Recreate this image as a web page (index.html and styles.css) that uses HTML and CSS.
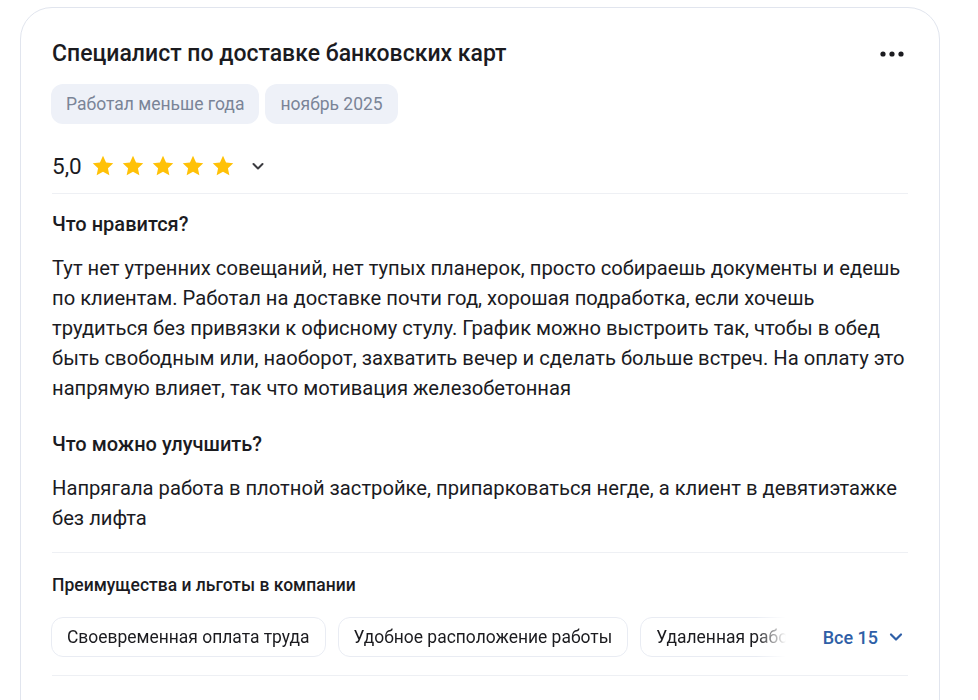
FILE: index.html
```html
<!DOCTYPE html>
<html lang="ru">
<head>
<meta charset="utf-8">
<link rel="stylesheet" href="styles.css">
</head>
<body>
<div class="card">
  <div class="head">
    <h2 class="title">Специалист по доставке банковских карт</h2>
    <button class="more" aria-label="Ещё">
      <svg width="24" height="8" viewBox="0 0 24 8"><circle cx="3" cy="4" r="2.6"/><circle cx="12" cy="4" r="2.6"/><circle cx="21" cy="4" r="2.6"/></svg>
    </button>
  </div>
  <div class="tags">
    <span class="tag">Работал меньше года</span>
    <span class="tag">ноябрь 2025</span>
  </div>
  <div class="rating">
    <span class="score">5,0</span>
    <span class="stars">
      <svg class="star" viewBox="0 0 24 24"><path d="M12 1.8l3.05 6.6 7.2.85-5.33 4.93 1.43 7.12L12 17.7l-6.35 3.6 1.43-7.12L1.75 9.25l7.2-.85z"/></svg>
      <svg class="star" viewBox="0 0 24 24"><path d="M12 1.8l3.05 6.6 7.2.85-5.33 4.93 1.43 7.12L12 17.7l-6.35 3.6 1.43-7.12L1.75 9.25l7.2-.85z"/></svg>
      <svg class="star" viewBox="0 0 24 24"><path d="M12 1.8l3.05 6.6 7.2.85-5.33 4.93 1.43 7.12L12 17.7l-6.35 3.6 1.43-7.12L1.75 9.25l7.2-.85z"/></svg>
      <svg class="star" viewBox="0 0 24 24"><path d="M12 1.8l3.05 6.6 7.2.85-5.33 4.93 1.43 7.12L12 17.7l-6.35 3.6 1.43-7.12L1.75 9.25l7.2-.85z"/></svg>
      <svg class="star" viewBox="0 0 24 24"><path d="M12 1.8l3.05 6.6 7.2.85-5.33 4.93 1.43 7.12L12 17.7l-6.35 3.6 1.43-7.12L1.75 9.25l7.2-.85z"/></svg>
    </span>
    <svg class="chev" viewBox="0 0 16 16"><path d="M3.5 6l4.5 4.5L12.5 6" fill="none" stroke="currentColor" stroke-width="2" stroke-linecap="round" stroke-linejoin="round"/></svg>
  </div>
  <hr class="divider">
  <h3 class="sub">Что нравится?</h3>
  <p class="text">Тут нет утренних совещаний, нет тупых планерок, просто собираешь документы и едешь по клиентам. Работал на доставке почти год, хорошая подработка, если хочешь трудиться без привязки к офисному стулу. График можно выстроить так, чтобы в обед быть свободным или, наоборот, захватить вечер и сделать больше встреч. На оплату это напрямую влияет, так что мотивация железобетонная</p>
  <h3 class="sub sub2">Что можно улучшить?</h3>
  <p class="text">Напрягала работа в плотной застройке, припарковаться негде, а клиент в девятиэтажке без лифта</p>
  <hr class="divider d2">
  <h4 class="benefits-title">Преимущества и льготы в компании</h4>
  <div class="benefits">
    <div class="chips">
      <span class="chip">Своевременная оплата труда</span>
      <span class="chip">Удобное расположение работы</span>
      <span class="chip">Удаленная работа</span>
    </div>
    <button class="all">Все 15
      <svg class="chev2" viewBox="0 0 16 16"><path d="M3 5.5l5 5 5-5" fill="none" stroke="currentColor" stroke-width="2.2" stroke-linecap="round" stroke-linejoin="round"/></svg>
    </button>
  </div>
  <hr class="divider d3">
</div>
</body>
</html>
```
FILE: styles.css
```css
* { box-sizing: border-box; }
html, body { margin: 0; padding: 0; background: #fff; }
body {
  font-family: Roboto, "Noto Sans", Arial, sans-serif;
  color: #1b1b1f;
  padding: 7px 0 0 20px;
  height: 700px;
  overflow: hidden;
}
.card {
  width: 920px;
  height: 760px;
  border: 1px solid #e1e5ee;
  border-radius: 32px;
  padding: 32px 31px;
}
.head {
  display: flex;
  justify-content: space-between;
  align-items: center;
}
.title {
  margin: 0;
  font-size: 23px;
  font-weight: 500;
  line-height: 28px;
}
.more {
  border: 0;
  background: none;
  padding: 0;
  margin-right: 4px;
  display: flex;
  fill: #1b1b1f;
}
.tags {
  display: flex;
  gap: 6px;
  margin-top: 16px;
  margin-left: -1px;
}
.tag {
  height: 40px;
  display: flex;
  align-items: center;
  padding: 0 15px;
  border-radius: 12px;
  background: #eef1f8;
  color: #7a8497;
  font-size: 17.5px;
}
.rating {
  display: flex;
  align-items: center;
  height: 32px;
  margin-top: 26px;
}
.score {
  font-size: 22.5px;
  font-weight: 400;
  margin-right: 9px;
}
.stars { display: flex; gap: 6px; }
.star { width: 24px; height: 24px; fill: #ffc107; }
.chev { width: 16px; height: 16px; color: #3b3b40; margin-left: 15px; }
.divider {
  border: 0;
  border-top: 1px solid #eef0f4;
  margin: 11px 0 0;
}
.sub {
  margin: 17px 0 0;
  font-size: 20px;
  font-weight: 500;
  line-height: 26px;
}
.sub2 { margin-top: 28px; }
.text {
  margin: 16px 0 0;
  font-size: 20.2px;
  line-height: 30px;
}
.d2 { margin-top: 19px; }
.benefits-title {
  margin: 20px 0 0;
  font-size: 17.5px;
  font-weight: 500;
  line-height: 24px;
}
.benefits {
  display: flex;
  align-items: center;
  margin-top: 20px;
}
.chips {
  display: flex;
  gap: 12px;
  width: 750px;
  margin-left: -1px;
  overflow: hidden;
  -webkit-mask-image: linear-gradient(90deg, #000 705px, transparent 735px);
  mask-image: linear-gradient(90deg, #000 705px, transparent 735px);
}
.chip {
  flex: none;
  height: 40px;
  display: flex;
  align-items: center;
  padding: 0 15px;
  border: 1px solid #e9ecf3;
  border-radius: 12px;
  font-size: 17.45px;
  white-space: nowrap;
}
.all {
  margin-left: auto;
  margin-right: 4px;
  display: flex;
  align-items: center;
  gap: 10px;
  border: 0;
  background: none;
  padding: 0;
  font-family: inherit;
  font-size: 18px;
  font-weight: 500;
  color: #2f5fa7;
}
.chev2 { width: 16px; height: 16px; }
.d3 { margin-top: 18px; }
```
